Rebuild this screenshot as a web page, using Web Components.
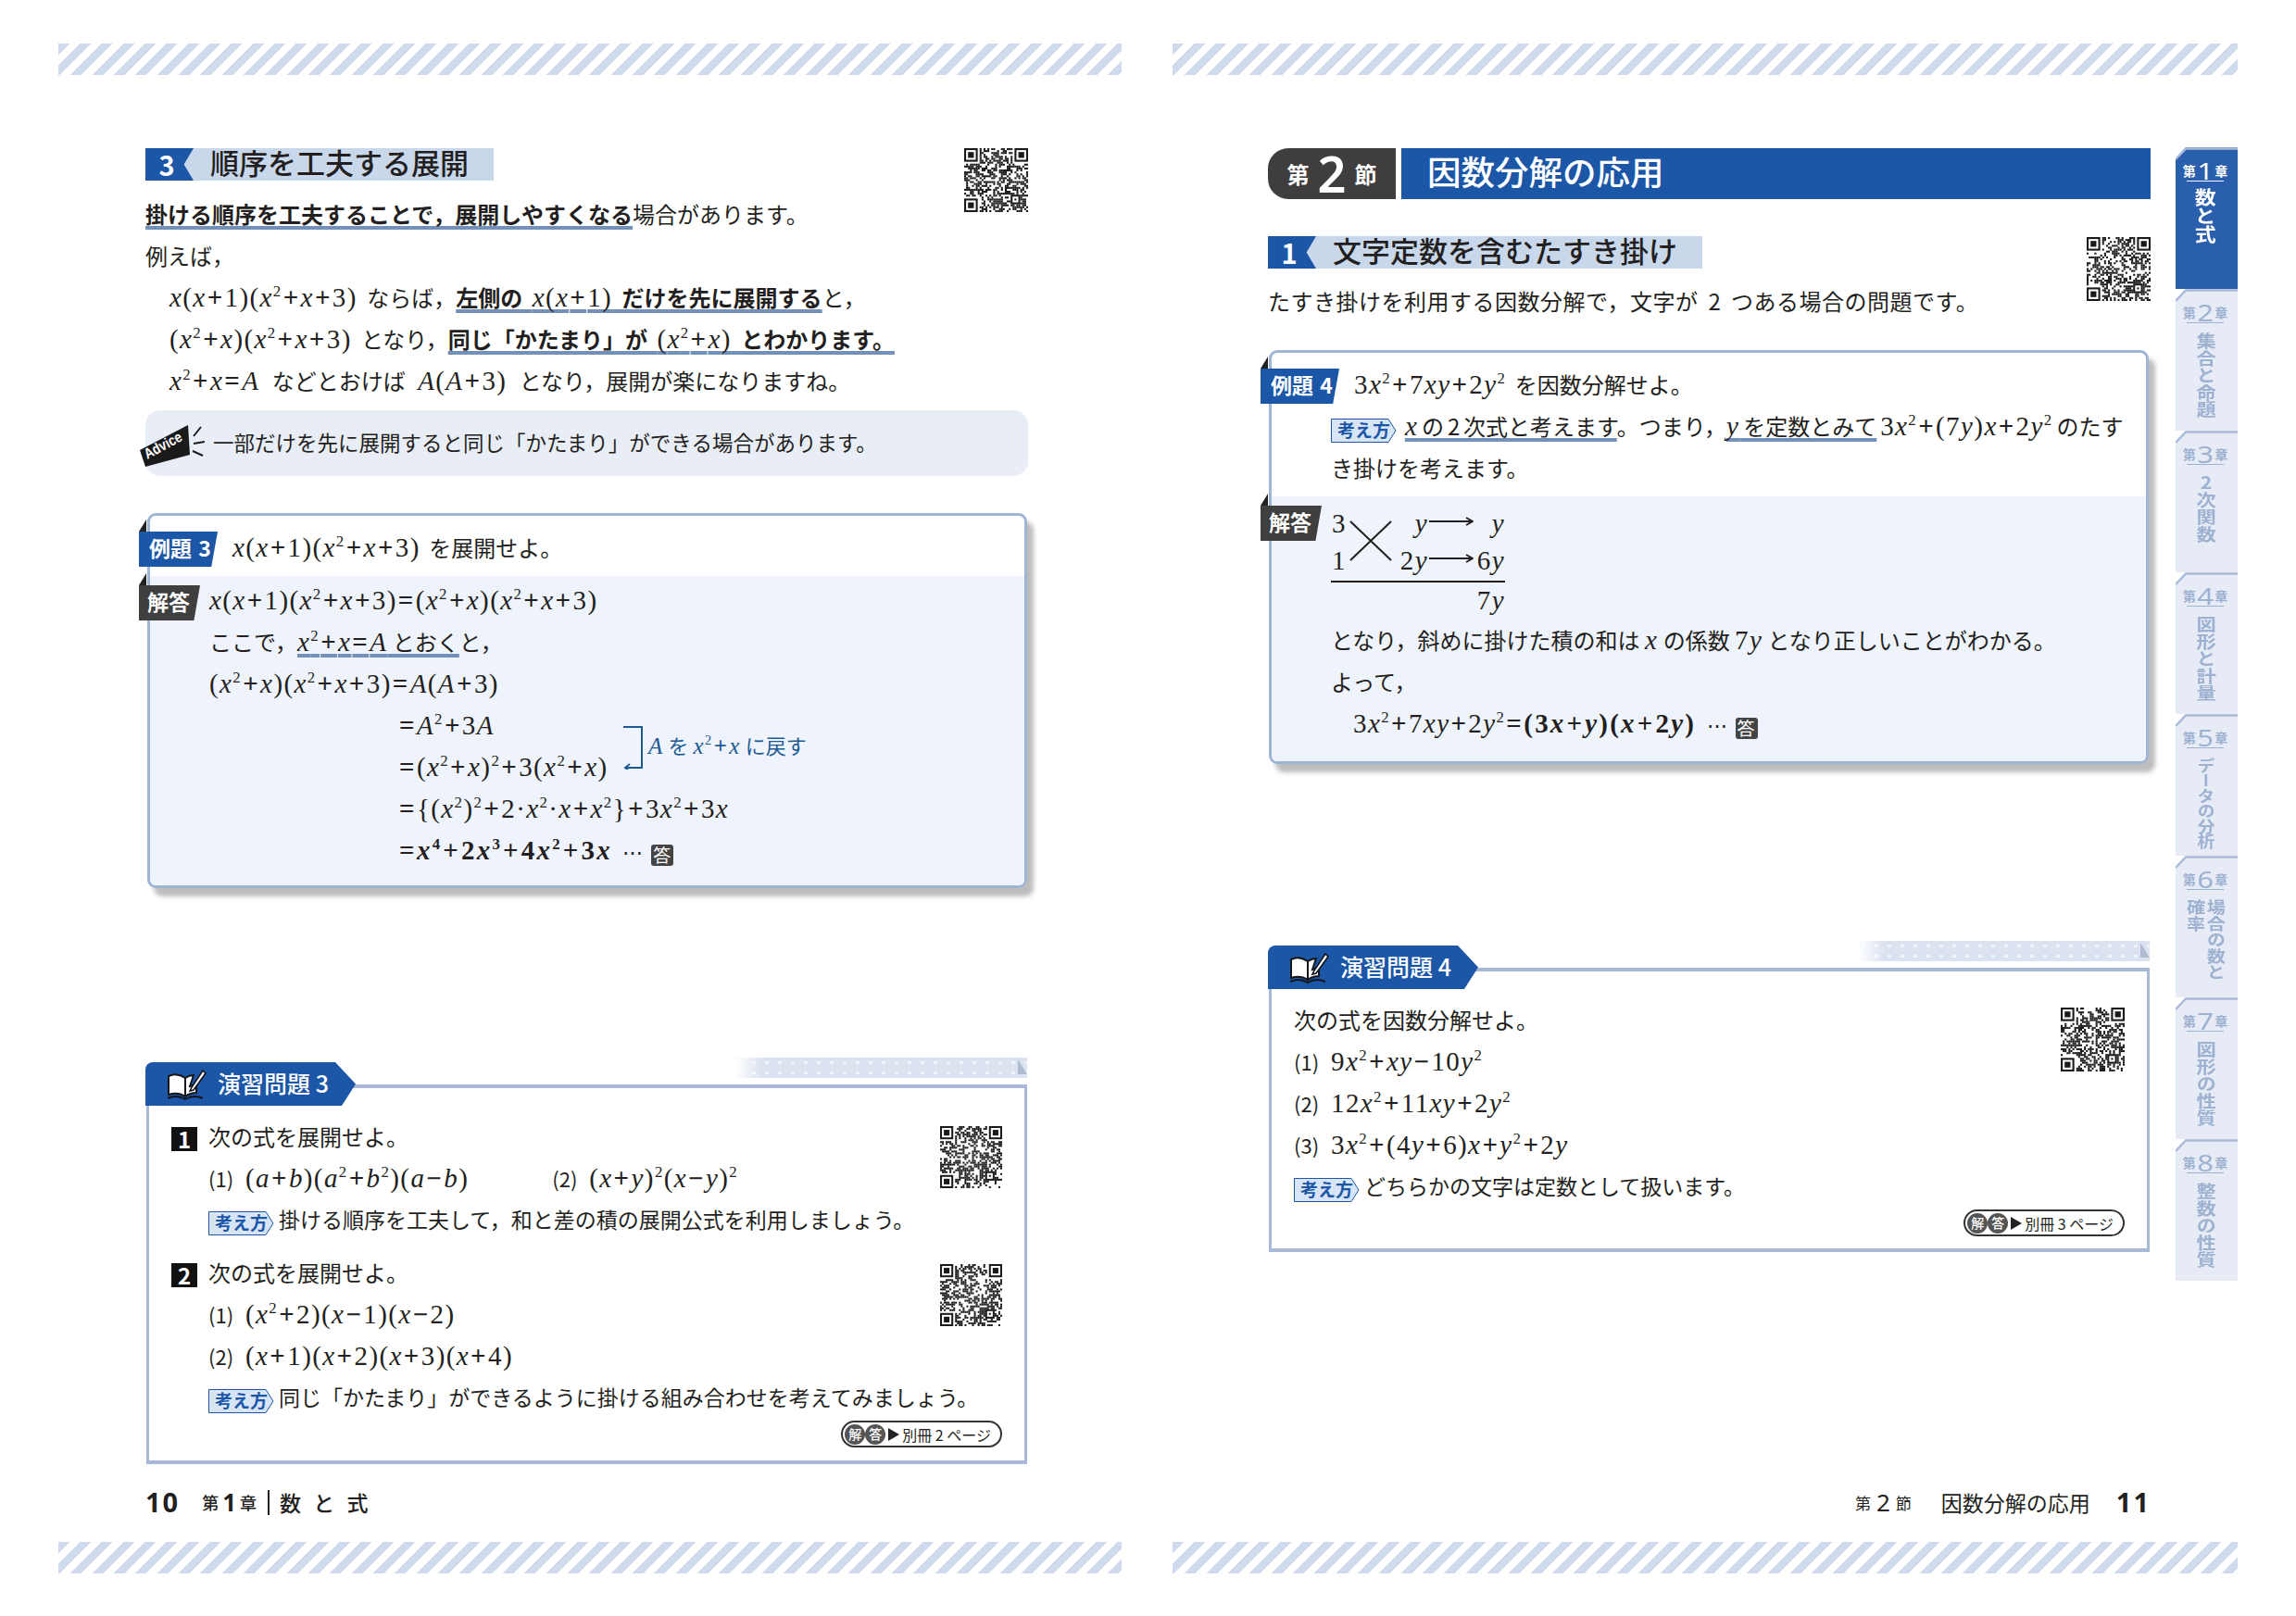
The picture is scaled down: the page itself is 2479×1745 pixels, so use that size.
<!DOCTYPE html>
<html lang="ja">
<head>
<meta charset="utf-8">
<title>第2節 因数分解の応用</title>
<style>
	html, body { margin: 0; background: #fff; }
	body {
		color: #231f20;
		font-family: "Noto Sans CJK JP", "Noto Sans", sans-serif;
		font-size: 24px;
		width: 2479px;
		height: 1745px;
		overflow: hidden;
	}
</style>
</head>
<body>
<book-spread>

	<!-- left page -->
	<book-page side="left">
		<flow-row>
			<div>
				<section-head num="3">順序を工夫する展開</section-head>
				<text-line style="margin-top:16px"><em-line>掛ける順序を工夫することで，展開しやすくなる</em-line>場合があります。</text-line>
				<text-line>例えば，</text-line>
				<text-line style="padding-left:26px;word-spacing:5px"><math-x e="x(x+1)(x^2+x+3)"></math-x> ならば，<em-line>左側の <math-x e="x(x+1)"></math-x> だけを先に展開する</em-line>と，</text-line>
				<text-line style="padding-left:26px;word-spacing:5px"><math-x e="(x^2+x)(x^2+x+3)"></math-x> となり，<em-line>同じ「かたまり」が <math-x e="(x^2+x)"></math-x> とわかります。</em-line></text-line>
				<text-line style="padding-left:26px;word-spacing:8px"><math-x e="x^2+x=A"></math-x> などとおけば <math-x e="A(A+3)"></math-x> となり，展開が楽になりますね。</text-line>
			</div>
			<qr-code slot="qr" seed="11" size="69"></qr-code>
		</flow-row>

		<advice-box style="margin-top:7px">一部だけを先に展開すると同じ「かたまり」ができる場合があります。</advice-box>

		<example-box label="例題 3" style="margin:40px 0 0 2px;width:950px">
			<text-line slot="q" style="padding-left:25px;word-spacing:4px"><math-x e="x(x+1)(x^2+x+3)"></math-x> を展開せよ。</text-line>
			<text-line><math-x e="x(x+1)(x^2+x+3)=(x^2+x)(x^2+x+3)"></math-x></text-line>
			<text-line>ここで，<em-line thin><math-x e="x^2+x=A"></math-x> とおく</em-line>と，</text-line>
			<text-line><math-x e="(x^2+x)(x^2+x+3)=A(A+3)"></math-x></text-line>
			<text-line style="padding-left:204px"><math-x e="=A^2+3A"></math-x><bracket-note><math-x e="A" size="25"></math-x> を <math-x e="x^2+x" size="25"></math-x> に戻す</bracket-note></text-line>
			<text-line style="padding-left:204px"><math-x e="=(x^2+x)^2+3(x^2+x)"></math-x></text-line>
			<text-line style="padding-left:204px"><math-x e="={(x^2)^2+2·x^2·x+x^2}+3x^2+3x"></math-x></text-line>
			<text-line style="padding-left:204px"><math-x e="="></math-x><math-x bold e="x^4+2x^3+4x^2+3x"></math-x> <answer-mark></answer-mark></text-line>
		</example-box>

		<exercise-box num="3" style="margin:212px 0 0 1px;width:951px">
			<flow-row>
				<div>
					<text-line><num-box>1</num-box>次の式を展開せよ。</text-line>
					<text-line style="padding-left:40px"><paren-no>(1)</paren-no><math-x e="(a+b)(a^2+b^2)(a−b)"></math-x><span style="display:inline-block;width:90px"></span><paren-no>(2)</paren-no><math-x e="(x+y)^2(x−y)^2"></math-x></text-line>
					<text-line style="padding-left:40px;font-size:23px"><hint-tag></hint-tag>掛ける順序を工夫して，和と差の積の展開公式を利用しましょう。</text-line>
				</div>
				<qr-code slot="qr" seed="23" size="67" style="margin-top:9px"></qr-code>
			</flow-row>
			<flow-row style="margin-top:12px">
				<div>
					<text-line><num-box>2</num-box>次の式を展開せよ。</text-line>
					<text-line style="padding-left:40px"><paren-no>(1)</paren-no><math-x e="(x^2+2)(x−1)(x−2)"></math-x></text-line>
					<text-line style="padding-left:40px"><paren-no>(2)</paren-no><math-x e="(x+1)(x+2)(x+3)(x+4)"></math-x></text-line>
					<text-line style="padding-left:40px;font-size:23px"><hint-tag></hint-tag>同じ「かたまり」ができるように掛ける組み合わせを考えてみましょう。</text-line>
				</div>
				<qr-code slot="qr" seed="37" size="67" style="margin-top:11px"></qr-code>
			</flow-row>
			<answer-ref>別冊 2 ページ</answer-ref>
		</exercise-box>

		<foot-bar slot="foot">
			<page-no>10</page-no>
			<foot-mark style="margin-left:24px" n="1" a="第" b="章"></foot-mark>
			<span style="border-left:2px solid #231f20;height:27px;margin:0 11px 0 12px"></span>
			<span style="font-size:23px;font-weight:500;white-space:pre;word-spacing:8px">数 と 式</span>
		</foot-bar>
	</book-page>

	<!-- right page -->
	<book-page side="right">
		<chapter-banner n="2">因数分解の応用</chapter-banner>

		<flow-row style="margin-top:40px">
			<div>
				<section-head num="1">文字定数を含むたすき掛け</section-head>
				<text-line style="margin-top:15px;letter-spacing:.5px;word-spacing:5px">たすき掛けを利用する因数分解で，文字が 2 つある場合の問題です。</text-line>
			</div>
			<qr-code slot="qr" seed="41" size="69" style="margin-top:1px"></qr-code>
		</flow-row>

		<example-box label="例題 4" style="margin:28px 0 0 1px;width:950px;--ab:16px">
			<text-line slot="q" style="padding-left:25px;word-spacing:4px"><math-x e="3x^2+7xy+2y^2"></math-x> を因数分解せよ。</text-line>
			<text-line slot="q" style="word-spacing:-1.5px"><hint-tag></hint-tag> <em-line thin><math-x e="x"></math-x> の 2 次式と考えます</em-line>。つまり，<em-line thin><math-x e="y"></math-x> を定数とみて</em-line> <math-x e="3x^2+(7y)x+2y^2"></math-x> のたす</text-line>
			<text-line slot="q">き掛けを考えます。</text-line>
			<tasuki-grid></tasuki-grid>
			<text-line>となり，斜めに掛けた積の和は <math-x e="x"></math-x> の係数 <math-x e="7y"></math-x> となり正しいことがわかる。</text-line>
			<text-line>よって，</text-line>
			<text-line style="padding-left:24px"><math-x e="3x^2+7xy+2y^2="></math-x><math-x bold e="(3x+y)(x+2y)"></math-x> <answer-mark></answer-mark></text-line>
		</example-box>

		<exercise-box num="4" style="margin:220px 0 0 1px;width:951px;--pb:13px">
			<flow-row>
				<div>
					<text-line>次の式を因数分解せよ。</text-line>
					<text-line><paren-no>(1)</paren-no><math-x e="9x^2+xy−10y^2"></math-x></text-line>
					<text-line><paren-no>(2)</paren-no><math-x e="12x^2+11xy+2y^2"></math-x></text-line>
					<text-line><paren-no>(3)</paren-no><math-x e="3x^2+(4y+6)x+y^2+2y"></math-x></text-line>
					<text-line style="font-size:23px"><hint-tag></hint-tag>どちらかの文字は定数として扱います。</text-line>
				</div>
				<qr-code slot="qr" seed="59" size="69" style="margin-top:7px"></qr-code>
			</flow-row>
			<answer-ref>別冊 3 ページ</answer-ref>
		</exercise-box>

		<foot-bar slot="foot" style="justify-content:flex-end">
			<foot-mark light n="2" a="第" b="節"></foot-mark>
			<span style="font-size:23px;margin:0 28px 0 32px">因数分解の応用</span>
			<page-no>11</page-no>
		</foot-bar>

		<chapter-tabs slot="aside">
			<chapter-tab n="1" active style="--title:20px;--gap:44px">数と式</chapter-tab>
			<chapter-tab n="2">集合と命題</chapter-tab>
			<chapter-tab n="3">2次関数</chapter-tab>
			<chapter-tab n="4">図形と計量</chapter-tab>
			<chapter-tab n="5" style="--title:16.5px">データの分析</chapter-tab>
			<chapter-tab n="6" style="--title:17.5px">場合の数と<br>確率</chapter-tab>
			<chapter-tab n="7">図形の性質</chapter-tab>
			<chapter-tab n="8">整数の性質</chapter-tab>
		</chapter-tabs>
	</book-page>
</book-spread>

<script>
/**
 * Base class: attaches an open shadow root and fills it from the static template.
 * The markup may depend on attributes, so it is filled in on connect.
 * Whitespace between tags is dropped, it would show up as a space in inline hosts.
 */
class ShadowElement extends HTMLElement {
	static template = '<slot></slot>';

	constructor() {
		super();
		this.attachShadow({mode: 'open'});
	}

	connectedCallback() {
		this.shadowRoot.innerHTML = this.render().replace(/>\s+</g, '><').trim();
	}

	render() {
		return this.constructor.template;
	}
}

class BookSpread extends ShadowElement {
	static template = `
		<style>
			:host {
				box-sizing: border-box;
				display: flex;
				gap: 55px;
				height: 1745px;
				padding: 47px 0 0 63px;
				width: 2479px;
			}
		</style>
		<slot></slot>
	`;
}

class BookPage extends ShadowElement {
	static template = `
		<style>
			:host { display: flex; flex-direction: column; height: 1652px; width: 1148px; }
			:host([side="right"]) { width: 1150px; }
			.stripe {
				background: repeating-linear-gradient(135deg, #cfdbec 0 8.5px, #fff 8.5px 16.5px);
				flex: none;
				height: 34px;
			}
			main { display: flex; flex: 1; min-height: 0; padding: 79px 0 0 94px; }
			:host([side="right"]) main { padding-left: 103px; }
			.col { flex: none; width: 953px; }
			.aside { flex: none; margin-left: 27px; }
			footer { flex: none; height: 40px; margin-bottom: 23px; padding-left: 94px; width: 953px; }
			:host([side="right"]) footer { padding-left: 103px; }
		</style>
		<div class="stripe"></div>
		<main>
			<div class="col"><slot></slot></div>
			<div class="aside"><slot name="aside"></slot></div>
		</main>
		<footer><slot name="foot"></slot></footer>
		<div class="stripe"></div>
	`;
}

class FlowRow extends ShadowElement {
	static template = `
		<style>
			:host { align-items: flex-start; display: flex; justify-content: space-between; }
			::slotted(div) { flex: 1; min-width: 0; }
		</style>
		<slot></slot>
		<slot name="qr"></slot>
	`;
}

/** One row of the page; the CJK face sits low, so the line box is a little short. */
class TextLine extends ShadowElement {
	static template = `
		<style>
			:host { display: block; height: 45px; line-height: 39px; position: relative; white-space: nowrap; }
		</style>
		<slot></slot>
	`;
}

/** Underlined passage, bold unless it has the thin attribute. */
class EmLine extends ShadowElement {
	static template = `
		<style>
			:host {
				font-weight: 700;
				text-decoration: underline 4px #7390b8;
				text-decoration-skip-ink: none;
				text-underline-offset: 3px;
			}
			:host([thin]) { font-weight: 400; }
		</style>
		<slot></slot>
	`;
}

/** Formula given as a string: letters go italic, ^n becomes a superscript. */
class MathX extends ShadowElement {
	render() {
		const src = this.getAttribute('e') || '';
		const size = this.getAttribute('size') || 29;
		let out = '';
		for (let i = 0; i < src.length; i++) {
			const ch = src[i];
			if (ch === '^') {
				out += `<sup>${src[++i]}</sup>`;
			} else if (/[a-zA-Z]/.test(ch)) {
				out += `<i>${ch}</i>`;
			} else if ('+=−'.includes(ch)) {
				out += `<span class="op">${ch}</span>`;
			} else {
				out += ch;
			}
		}
		return `
			<style>
				:host { font-family: "Liberation Serif", serif; font-size: ${size}px; font-weight: 400; letter-spacing: 1.4px; }
				:host([bold]) { font-weight: 700; letter-spacing: 2.2px; }
				sup { font-size: .58em; line-height: 0; vertical-align: .68em; }
				.op { font-weight: 700; margin: 0 1px; }
			</style>${out}`;
	}
}

class SectionHead extends ShadowElement {
	render() {
		return `
			<style>
				:host {
					align-items: center;
					background: #c9d7eb;
					display: inline-flex;
					font-size: 31px;
					font-weight: 500;
					height: 35px;
					line-height: 35px;
					padding-right: 27px;
					vertical-align: top;
				}
				.num {
					background: #1c56a7;
					clip-path: polygon(0 0, 100% 0, 80% 50%, 100% 100%, 0 100%);
					color: #fff;
					font-size: 29px;
					font-weight: 700;
					margin-right: 18px;
					padding-right: 6px;
					text-align: center;
					width: 46px;
				}
				.txt { padding-bottom: 6px; }
			</style>
			<span class="num">${this.getAttribute('num')}</span><span class="txt"><slot></slot></span>`;
	}
}

class QrCode extends ShadowElement {
	render() {
		const n = 33;
		const size = this.getAttribute('size') || 69;
		let seed = Number(this.getAttribute('seed')) * 7919 + 17;
		const rnd = () => (seed = (seed * 16807) % 2147483647) / 2147483647;
		const finder = (x, y) => x >= 0 && x < 8 && y >= 0 && y < 8;
		let cells = '';
		for (let y = 0; y < n; y++) {
			for (let x = 0; x < n; x++) {
				if (finder(x, y) || finder(n - 1 - x, y) || finder(x, n - 1 - y)) continue;
				if (x >= n - 9 && x < n - 4 && y >= n - 9 && y < n - 4) continue;
				if (rnd() > .5) cells += `<rect x="${x}" y="${y}" width="1" height="1"/>`;
			}
		}
		const eye = (x, y, s, inner) => `
			<rect x="${x}" y="${y}" width="${s}" height="${s}"/>
			<rect x="${x + 1}" y="${y + 1}" width="${s - 2}" height="${s - 2}" fill="#fff"/>
			<rect x="${x + inner}" y="${y + inner}" width="${s - 2 * inner}" height="${s - 2 * inner}"/>`;
		return `
			<style>:host { display: block; flex: none; height: ${size}px; width: ${size}px; }</style>
			<svg width="${size}" height="${size}" viewBox="0 0 ${n} ${n}" fill="#1a1a1a">
				${cells}${eye(0, 0, 7, 2)}${eye(n - 7, 0, 7, 2)}${eye(0, n - 7, 7, 2)}${eye(n - 9, n - 9, 5, 2)}
			</svg>`;
	}
}

class AdviceBox extends ShadowElement {
	static template = `
		<style>
			:host {
				align-items: center;
				background: #e8edf6;
				border-radius: 16px;
				display: flex;
				font-size: 22.5px;
				height: 71px;
				padding-left: 73px;
				position: relative;
			}
			svg { left: -6px; position: absolute; top: 16px; }
			span { padding-bottom: 3px; }
		</style>
		<svg width="70" height="46" viewBox="0 0 70 46">
			<polygon points="0,27 52,0 54,32 6,45" fill="#1a1a1a"/>
			<path d="M58 12 66 2M58 20 70 18M57 28 68 33" stroke="#1a1a1a" stroke-width="2"/>
			<text transform="translate(8 37) rotate(-28)" font-family="Liberation Sans" font-size="16" font-weight="700" fill="#fff" textLength="44" lengthAdjust="spacingAndGlyphs">Advice</text>
		</svg>
		<span><slot></slot></span>
	`;
}

class ExampleBox extends ShadowElement {
	render() {
		return `
			<style>
				:host { display: block; position: relative; }
				.frame {
					background: #fff;
					border: 3px solid #9fb5d6;
					border-radius: 9px;
					box-shadow: 7px 9px 5px #bdbdbd;
				}
				.q { padding: 14px 0 6px 64px; }
				.a {
					background: #eff3fb;
					border-radius: 0 0 6px 6px;
					padding: 6px 0 var(--ab, 13px) 64px;
					position: relative;
				}
				.tag { height: 38px; position: absolute; }
				.tag b {
					color: #fff;
					display: block;
					font-size: 23px;
					font-weight: 700;
					height: 38px;
					line-height: 35px;
					padding-left: 9px;
					word-spacing: 2px;
				}
				.tag::before {
					background: #222;
					clip-path: polygon(100% 0, 100% 100%, 0 100%);
					content: "";
					height: 13px;
					left: 0;
					position: absolute;
					top: -13px;
					width: 8px;
				}
				.ex { left: -9px; top: 20px; }
				.ex b {
					background: #1c56a7;
					clip-path: polygon(0 0, 100% 0, 92% 100%, 0 100%);
					padding-left: 11px;
					width: 74px;
				}
				.ans { left: -12px; top: 10px; }
				.ans b {
					background: #3f3f3f;
					clip-path: polygon(0 0, 100% 0, 90% 100%, 0 100%);
					width: 57px;
				}
			</style>
			<div class="frame">
				<div class="q"><slot name="q"></slot></div>
				<div class="a">
					<div class="tag ans"><b>解答</b></div>
					<slot></slot>
				</div>
			</div>
			<div class="tag ex"><b>${this.getAttribute('label')}</b></div>`;
	}
}

/** Bracket with a return arrow spanning two formula lines, with its caption. */
class BracketNote extends ShadowElement {
	static template = `
		<style>
			:host {
				align-items: center;
				color: #1d5a94;
				display: flex;
				font-size: 22px;
				gap: 5px;
				height: 47px;
				left: 447px;
				line-height: 47px;
				position: absolute;
				top: 21px;
			}
			svg { flex: none; }
			span { margin-top: -6px; }
		</style>
		<svg width="22" height="47" viewBox="0 0 22 47" fill="none" stroke="#1d5a94" stroke-width="2">
			<path d="M0 1H20V45H3M7 41 2 45 7 49"/>
		</svg>
		<span><slot></slot></span>
	`;
}

class AnswerMark extends ShadowElement {
	static template = `
		<style>
			:host { font-family: "Liberation Serif", serif; font-size: 22px; letter-spacing: 1px; margin-left: 6px; }
			b {
				background: #444;
				border-radius: 3px;
				color: #fff;
				display: inline-block;
				font-family: "Noto Sans CJK JP", sans-serif;
				font-size: 19px;
				font-weight: 400;
				height: 23px;
				line-height: 22px;
				margin-left: 8px;
				text-align: center;
				vertical-align: -3px;
				width: 24px;
			}
		</style>
		<span>⋯</span><b>答</b>
	`;
}

/** Cross-multiplication figure of example 4. */
class TasukiGrid extends ShadowElement {
	static template = `
		<style>
			:host {
				display: grid;
				grid-template-columns: 20px 46px 39px 49px 34px;
				grid-template-rows: 40px 40px 3px 40px;
				margin-bottom: 3px;
				padding-top: 3px;
				width: 188px;
			}
			.c { align-items: center; display: flex; justify-content: flex-end; }
			.n { justify-content: flex-start; padding-left: 1px; }
			svg { display: block; }
			.x { grid-column: 2; grid-row: 1 / 3; }
			.rule { border-top: 2px solid #231f20; grid-column: 1 / -1; grid-row: 3; margin-top: 2px; }
			.sum { grid-column: 5; grid-row: 4; }
		</style>
		<div class="c n"><math-x e="3"></math-x></div>
		<svg class="x" width="46" height="80" viewBox="0 0 46 80" stroke="#231f20" stroke-width="2">
			<path d="M1 18 45 60M45 18 1 60"/>
		</svg>
		<div class="c"><math-x e="y"></math-x></div>
		<svg width="49" height="40" viewBox="0 0 49 40" fill="none" stroke="#231f20" stroke-width="2"><path d="M1 18H47M41 14 48 18 41 22"/></svg>
		<div class="c"><math-x e="y"></math-x></div>
		<div class="c n"><math-x e="1"></math-x></div>
		<div class="c"><math-x e="2y"></math-x></div>
		<svg width="49" height="40" viewBox="0 0 49 40" fill="none" stroke="#231f20" stroke-width="2"><path d="M1 18H47M41 14 48 18 41 22"/></svg>
		<div class="c"><math-x e="6y"></math-x></div>
		<div class="rule"></div>
		<div class="c sum"><math-x e="7y"></math-x></div>
	`;
}

class ExerciseBox extends ShadowElement {
	render() {
		return `
			<style>
				:host { display: block; position: relative; }
				.frame {
					border: solid #a7b9d6;
					border-width: 4px 3px 4px 3px;
					padding: var(--pt, 32px) 24px var(--pb, 14px);
				}
				.tab {
					align-items: center;
					background: #1c56a7;
					border-top-left-radius: 8px;
					clip-path: polygon(0 0, 205px 0, 100% 50%, 212px 100%, 0 100%);
					color: #fff;
					display: flex;
					font-size: 25px;
					font-weight: 500;
					gap: 11px;
					height: 47px;
					left: -1px;
					padding-left: 23px;
					position: absolute;
					top: -24px;
					width: 204px;
				}
				.tab span { padding-bottom: 3px; }
				.strip {
					background-color: #dbe3f0;
					background-image: radial-gradient(#f1f4fa 2px, transparent 2.5px);
					background-size: 14px 11px;
					height: 22px;
					-webkit-mask-image: linear-gradient(90deg, transparent, #000 30px);
					mask-image: linear-gradient(90deg, transparent, #000 30px);
					position: absolute;
					right: 0;
					top: -29px;
					width: 316px;
				}
				.strip::after {
					background: #aebbd2;
					clip-path: polygon(0 0, 100% 100%, 0 100%);
					content: "";
					height: 16px;
					position: absolute;
					right: 0;
					top: 2px;
					width: 10px;
				}
			</style>
			<div class="strip"></div>
			<div class="frame"><slot></slot></div>
			<div class="tab">
				<svg width="44" height="36" viewBox="0 0 44 36" stroke="#14161c" stroke-width="2" fill="#fff">
					<path d="M2 9C8 6 14 7 20 11V31C14 27 8 27 2 29Z"/>
					<path d="M20 11C23 9 26 8 29 8L25 20 32 18V27C28 27 24 28 20 31Z"/>
					<path d="M27 21 25 25 29 24 42 6 39 3Z" stroke-width="1.6"/>
					<path d="M1 33C8 30 15 31 20 34 25 31 32 30 39 33" fill="none" stroke-width="2"/>
				</svg>
				<span>演習問題 ${this.getAttribute('num')}</span>
			</div>`;
	}
}

class NumBox extends ShadowElement {
	static template = `
		<style>
			:host {
				background: #111;
				color: #fff;
				display: inline-block;
				font-size: 24px;
				font-weight: 700;
				height: 26px;
				line-height: 25px;
				margin-right: 12px;
				text-align: center;
				vertical-align: -3px;
				width: 28px;
			}
		</style>
		<slot></slot>
	`;
}

class ParenNo extends ShadowElement {
	static template = `
		<style>
			:host {
				display: inline-block;
				font-size: 22px;
				width: 40px;
			}
		</style>
		<slot></slot>
	`;
}

class HintTag extends ShadowElement {
	static template = `
		<style>
			:host {
				color: #1c56a7;
				display: inline-block;
				font-size: 19px;
				font-weight: 700;
				height: 26px;
				line-height: 24px;
				margin-right: 5px;
				padding-left: 7px;
				position: relative;
				vertical-align: -2px;
				width: 64px;
			}
			svg { left: 0; position: absolute; top: 0; }
			span { position: relative; }
		</style>
		<svg width="71" height="26" viewBox="0 0 71 26">
			<path d="M.5.5H62L70 13 62 25.5H.5Z" fill="#d7e5f6" stroke="#1c56a7"/>
		</svg>
		<span>考え方</span>
	`;
}

class AnswerRef extends ShadowElement {
	static template = `
		<style>
			:host { display: flex; justify-content: flex-end; }
			.pill {
				align-items: center;
				border: 2px solid #333;
				border-radius: 15px;
				box-sizing: border-box;
				display: flex;
				font-size: 16px;
				height: 29px;
				padding: 0 10px 0 2px;
			}
			b {
				background: #555;
				border-radius: 50%;
				color: #fff;
				display: block;
				font-size: 14px;
				font-weight: 500;
				height: 22px;
				line-height: 21px;
				text-align: center;
				width: 22px;
			}
			i { border-bottom: 7px solid transparent; border-left: 12px solid #222; border-top: 7px solid transparent; margin: 0 3px 0 3px; }
		</style>
		<div class="pill"><b>解</b><b>答</b><i></i><slot></slot></div>
	`;
}

class FootBar extends ShadowElement {
	static template = `
		<style>
			:host { align-items: center; display: flex; height: 40px; }
		</style>
		<slot></slot>
	`;
}

class PageNo extends ShadowElement {
	static template = `
		<style>
			:host { font-family: "Noto Sans", sans-serif; font-size: 29px; font-weight: 700; letter-spacing: 2px; line-height: 40px; }
		</style>
		<slot></slot>
	`;
}

class FootMark extends ShadowElement {
	render() {
		return `
			<style>
				:host { align-items: center; display: inline-flex; font-size: 18px; font-weight: 500; gap: 4px; }
				:host([light]) { font-weight: 400; font-size: 17px; gap: 6px; }
				b { font-family: "Noto Sans", sans-serif; font-size: 26px; font-weight: 700; }
				:host([light]) b { font-weight: 400; }
			</style>
			<span>${this.getAttribute('a')}</span><b>${this.getAttribute('n')}</b><span>${this.getAttribute('b')}</span>`;
	}
}

class ChapterBanner extends ShadowElement {
	render() {
		return `
			<style>
				:host { color: #fff; display: flex; gap: 6px; height: 55px; }
				.sec {
					align-items: center;
					background: #3f3d3e;
					border-radius: 22px 0 0 22px;
					display: flex;
					flex: none;
					font-size: 24px;
					font-weight: 700;
					gap: 9px;
					justify-content: center;
					width: 138px;
				}
				.sec b { font-family: "Noto Sans", sans-serif; font-size: 54px; font-weight: 600; line-height: 55px; }
				.title {
					background: #1c56a7;
					flex: 1;
					font-size: 36.5px;
					font-weight: 500;
					line-height: 49px;
					padding-left: 28px;
				}
			</style>
			<div class="sec"><span>第</span><b>${this.getAttribute('n')}</b><span>節</span></div>
			<div class="title"><slot></slot></div>`;
	}
}

class ChapterTabs extends ShadowElement {
	static template = `
		<style>
			:host { display: block; margin-top: -1px; width: 67px; }
		</style>
		<slot></slot>
	`;
}

class ChapterTab extends ShadowElement {
	render() {
		return `
			<style>
				:host {
					color: #9db1d1;
					display: block;
					height: 153px;
					position: relative;
				}
				:host([active]) { color: #fff; }
				.bg {
					background: #e6ebf5;
					clip-path: polygon(11px 0, 100% 0, 100% 100%, 0 100%, 0 12px);
					inset: 0;
					position: absolute;
				}
				:host([active]) .bg { background: #2a5fae; }
				svg { left: 0; position: absolute; top: 0; }
				.in {
					align-items: center;
					display: flex;
					flex-direction: column;
					font-weight: 700;
					inset: 0 3px 0 0;
					position: absolute;
				}
				.no {
					align-items: center;
					border-bottom: 1.5px solid currentColor;
					display: flex;
					font-size: 14px;
					gap: 3px;
					height: 22px;
					justify-content: center;
					margin-top: 14px;
					width: 40px;
				}
				.no b {
					font-family: "Noto Sans", sans-serif;
					font-size: 25px;
					font-weight: 400;
					line-height: 22px;
					transform: scaleX(1.25);
				}
				.title {
					font-size: var(--title, 18.5px);
					line-height: 1.08;
					margin-top: calc(var(--gap, 47px) - 37px);
					text-orientation: upright;
					transform: scaleX(1.15);
					writing-mode: vertical-rl;
				}
			</style>
			<div class="bg"></div>
			<svg width="67" height="14" viewBox="0 0 67 14" fill="none" stroke="#a9bbd8" stroke-width="2.5">
				<path d="M0 13 11 1.5H67"/>
			</svg>
			<div class="in">
				<div class="no"><span>第</span><b>${this.getAttribute('n')}</b><span>章</span></div>
				<div class="title"><slot></slot></div>
			</div>`;
	}
}

customElements.define('book-spread', BookSpread);
customElements.define('book-page', BookPage);
customElements.define('flow-row', FlowRow);
customElements.define('text-line', TextLine);
customElements.define('em-line', EmLine);
customElements.define('math-x', MathX);
customElements.define('section-head', SectionHead);
customElements.define('qr-code', QrCode);
customElements.define('advice-box', AdviceBox);
customElements.define('example-box', ExampleBox);
customElements.define('bracket-note', BracketNote);
customElements.define('answer-mark', AnswerMark);
customElements.define('tasuki-grid', TasukiGrid);
customElements.define('exercise-box', ExerciseBox);
customElements.define('num-box', NumBox);
customElements.define('paren-no', ParenNo);
customElements.define('hint-tag', HintTag);
customElements.define('answer-ref', AnswerRef);
customElements.define('foot-bar', FootBar);
customElements.define('page-no', PageNo);
customElements.define('foot-mark', FootMark);
customElements.define('chapter-banner', ChapterBanner);
customElements.define('chapter-tabs', ChapterTabs);
customElements.define('chapter-tab', ChapterTab);
</script>
</body>
</html>
